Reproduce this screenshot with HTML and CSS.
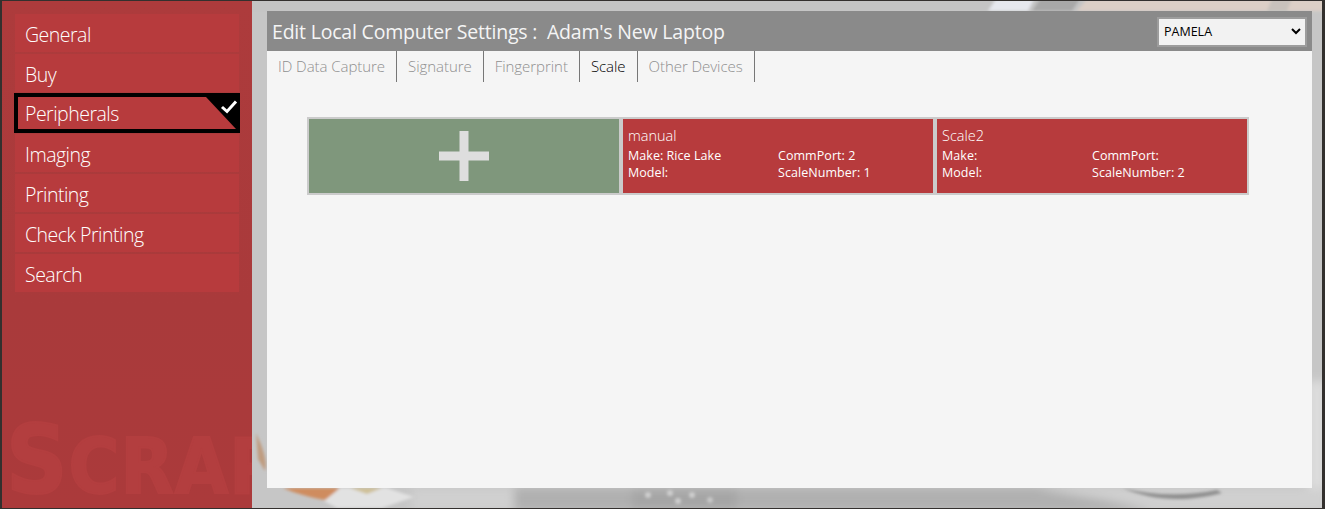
FILE: index.html
```html
<!DOCTYPE html>
<html lang="en">
<head>
<meta charset="utf-8">
<title>Edit Local Computer Settings</title>
<link rel="stylesheet" href="styles.css">
</head>
<body>
<div class="app">
  <nav class="sidebar">
    <a class="nav-item">General</a>
    <a class="nav-item">Buy</a>
    <a class="nav-item active">Peripherals
      <span class="corner"></span>
      <svg class="check" viewBox="0 0 18 15" width="18" height="15"><path d="M2 8 L7 12.500 L16 2.500" fill="none" stroke="#fff" stroke-width="3"/></svg>
    </a>
    <a class="nav-item">Imaging</a>
    <a class="nav-item">Printing</a>
    <a class="nav-item">Check Printing</a>
    <a class="nav-item">Search</a>
    <div class="watermark"><span class="wm-cap">S</span>CRAP</div>
  </nav>
  <main class="stage">
    <svg class="art" viewBox="0 0 1070 507" width="1070" height="507" aria-hidden="true">
      <defs><filter id="soft"><feGaussianBlur stdDeviation="1.500"/></filter><filter id="softer"><feGaussianBlur stdDeviation="5"/></filter></defs>
      <g filter="url(#softer)">
        <path d="M1055 380H1075V510H1055Z" fill="#dcdcdc"/>
        <path d="M160 487H1075V510H160Z" fill="#b0b0b0"/>
        <path d="M160 487H262V510H160Z" fill="#d0d0d0"/>
        <path d="M785 487H1075V510H900C860 498 820 495 785 487Z" fill="#d0d0d0"/>
        <path d="M380 487H485V510H380Z" fill="#a6a6a6"/>
      </g>
      <g filter="url(#soft)">
        <path d="M0 -2H1075V10H0Z" fill="#c4c4c4"/>
        <path d="M744 -2H782L776 10H736Z" fill="#e6e8ee"/>
        <path d="M788 -2H828L820 10H780Z" fill="#a8a8a8"/>
        <path d="M835 -2H1075V10H825Z" fill="#dccfc6"/>
        <path d="M1020 -2H1040L1035 10H1015Z" fill="#c8c2bc"/>
        <path d="M4 432C10 445 16 460 13 470L6 458Z" fill="#bf9c80"/>
        <path d="M31 487H88L78 500C60 497 42 492 31 487Z" fill="#cf8c5e"/>
        <path d="M88 487H135L162 496L130 507H85L72 500Z" fill="#e2e2e2"/>
        <path d="M98 487H130L115 493Z" fill="#cfc097"/>
        <circle cx="396" cy="494" r="3" fill="#cfcfcf"/><circle cx="418" cy="492" r="3" fill="#cfcfcf"/><circle cx="426" cy="500" r="3" fill="#cfcfcf"/><circle cx="440" cy="494" r="3" fill="#cfcfcf"/><circle cx="458" cy="499" r="3" fill="#c8c8c8"/>
        <path d="M870 487C900 494 930 496 965 489L970 492C930 502 900 499 870 487Z" fill="#8e8e8e"/>
      </g>
    </svg>
    <section class="panel">
      <header class="panel-head">
        <h1 class="title">Edit Local Computer Settings :&nbsp; Adam's New Laptop</h1>
        <div class="select-wrap">
          <select class="user-select"><option>PAMELA</option></select>
          <svg class="chevron" viewBox="0 0 10 7" width="10" height="7"><path d="M1 1 L5 5 L9 1" fill="none" stroke="#000" stroke-width="2"/></svg>
        </div>
      </header>
      <div class="tabs">
        <a class="tab">ID Data Capture</a>
        <a class="tab">Signature</a>
        <a class="tab">Fingerprint</a>
        <a class="tab current">Scale</a>
        <a class="tab">Other Devices</a>
      </div>
      <div class="cards">
        <div class="card add"><svg viewBox="0 0 50 50" width="50" height="50"><path d="M20.500 0h9v20.500H50v9H29.500V50h-9V29.500H0v-9h20.500Z" fill="#dedede"/></svg></div>
        <div class="card">
          <div class="card-name">manual</div>
          <div class="card-grid">
            <span>Make: Rice Lake</span><span>CommPort: 2</span>
            <span>Model:</span><span>ScaleNumber: 1</span>
          </div>
        </div>
        <div class="card">
          <div class="card-name">Scale2</div>
          <div class="card-grid">
            <span>Make:</span><span>CommPort:</span>
            <span>Model:</span><span>ScaleNumber: 2</span>
          </div>
        </div>
      </div>
    </section>
  </main>
</div>
</body>
</html>
```
FILE: styles.css
```css
* { box-sizing: border-box; }
html, body { margin: 0; height: 100%; overflow: hidden; }
body {
  background: #33302e;
  font-family: "Open Sans", "Noto Sans", sans-serif;
}
.app { display: flex; height: 509px; padding: 1px 3px 1px 2px; }
.sidebar {
  position: relative;
  width: 250px;
  padding: 13px 13px 0;
  display: flex;
  flex-direction: column;
  gap: 2px;
  background: linear-gradient(#ad3b3c, #a93a3b 60%, #ab3a3b);
  overflow: hidden;
}
.nav-item {
  position: relative;
  height: 38px;
  padding-left: 10px;
  line-height: 41px;
  font-size: 19.500px;
  font-weight: 300;
  letter-spacing: -0.5px;
  color: #fff;
  background: #b73b3d;
  z-index: 1;
}
.nav-item.active {
  width: 226px;
  height: 40px;
  margin: -1px;
  border: 4px solid #000;
  padding-left: 7px;
  line-height: 33px;
}
.corner {
  position: absolute;
  top: 0;
  right: 0;
  width: 30px;
  height: 32px;
  background: #000;
  clip-path: polygon(0 0, 100% 0, 100% 100%);
}
.check { position: absolute; top: 2px; right: -2px; }
.watermark {
  position: absolute;
  left: 4px;
  top: 409px;
  font-family: "DejaVu Sans", sans-serif;
  font-stretch: condensed;
  font-weight: 700;
  font-size: 77px;
  line-height: 100px;
  letter-spacing: 1px;
  color: #b33e3f;
  -webkit-text-stroke: 2px #b33e3f;
  white-space: nowrap;
}
.wm-cap { font-size: 95px; }
.stage {
  position: relative;
  flex: 1;
  padding: 10px 10px 20px 15px;
  background: #c6c6c6;
  overflow: hidden;
}
.art { position: absolute; left: 0; top: 0; }
.panel {
  position: relative;
  height: 477px;
  background: #f5f5f5;
  display: flex;
  flex-direction: column;
}
.panel-head {
  flex: none;
  height: 40px;
  padding: 1px 5px 0 5px;
  display: flex;
  align-items: center;
  justify-content: space-between;
  background: #8a8a8a;
}
.title {
  margin: 0;
  font-size: 19.500px;
  font-weight: 400;
  letter-spacing: -0.2px;
  color: #f5f5f5;
}
.select-wrap { position: relative; width: 150px; height: 30px; }
.user-select {
  appearance: none;
  width: 100%;
  height: 100%;
  padding-left: 5px;
  border: 2px solid #9d9d9d;
  border-radius: 0;
  background: #f2f2f2;
  font: 12.500px "Open Sans", sans-serif;
  color: #000;
}
.chevron { position: absolute; right: 6px; top: 11px; pointer-events: none; }
.tabs { flex: none; display: flex; height: 31px; }
.tab {
  padding: 0 11px;
  border-right: 1px solid #777;
  line-height: 31px;
  font-size: 15px;
  font-weight: 300;
  letter-spacing: -0.05px;
  color: #8f8f8f;
}
.tab.current { color: #000; }
.cards {
  width: 942px;
  height: 78px;
  margin: 35px 0 0 40px;
  display: flex;
  gap: 4px;
  padding: 2px;
  background: #cbcbcb;
}
.card {
  flex: 1;
  padding: 7px 0 0 5px;
  background: #b73b3d;
  color: #fff;
}
.card.add {
  flex: none;
  width: 310px;
  padding: 0;
  display: flex;
  align-items: center;
  justify-content: center;
  background: #7f977c;
}
.card-name { font-size: 14.500px; font-weight: 300; line-height: 20px; letter-spacing: 0; }
.card-grid {
  display: grid;
  grid-template-columns: 150px 1fr;
  grid-auto-rows: 17px;
  margin-top: 1px;
  font-size: 12.500px;
  line-height: 17px;
  letter-spacing: 0.05px;
}
```
